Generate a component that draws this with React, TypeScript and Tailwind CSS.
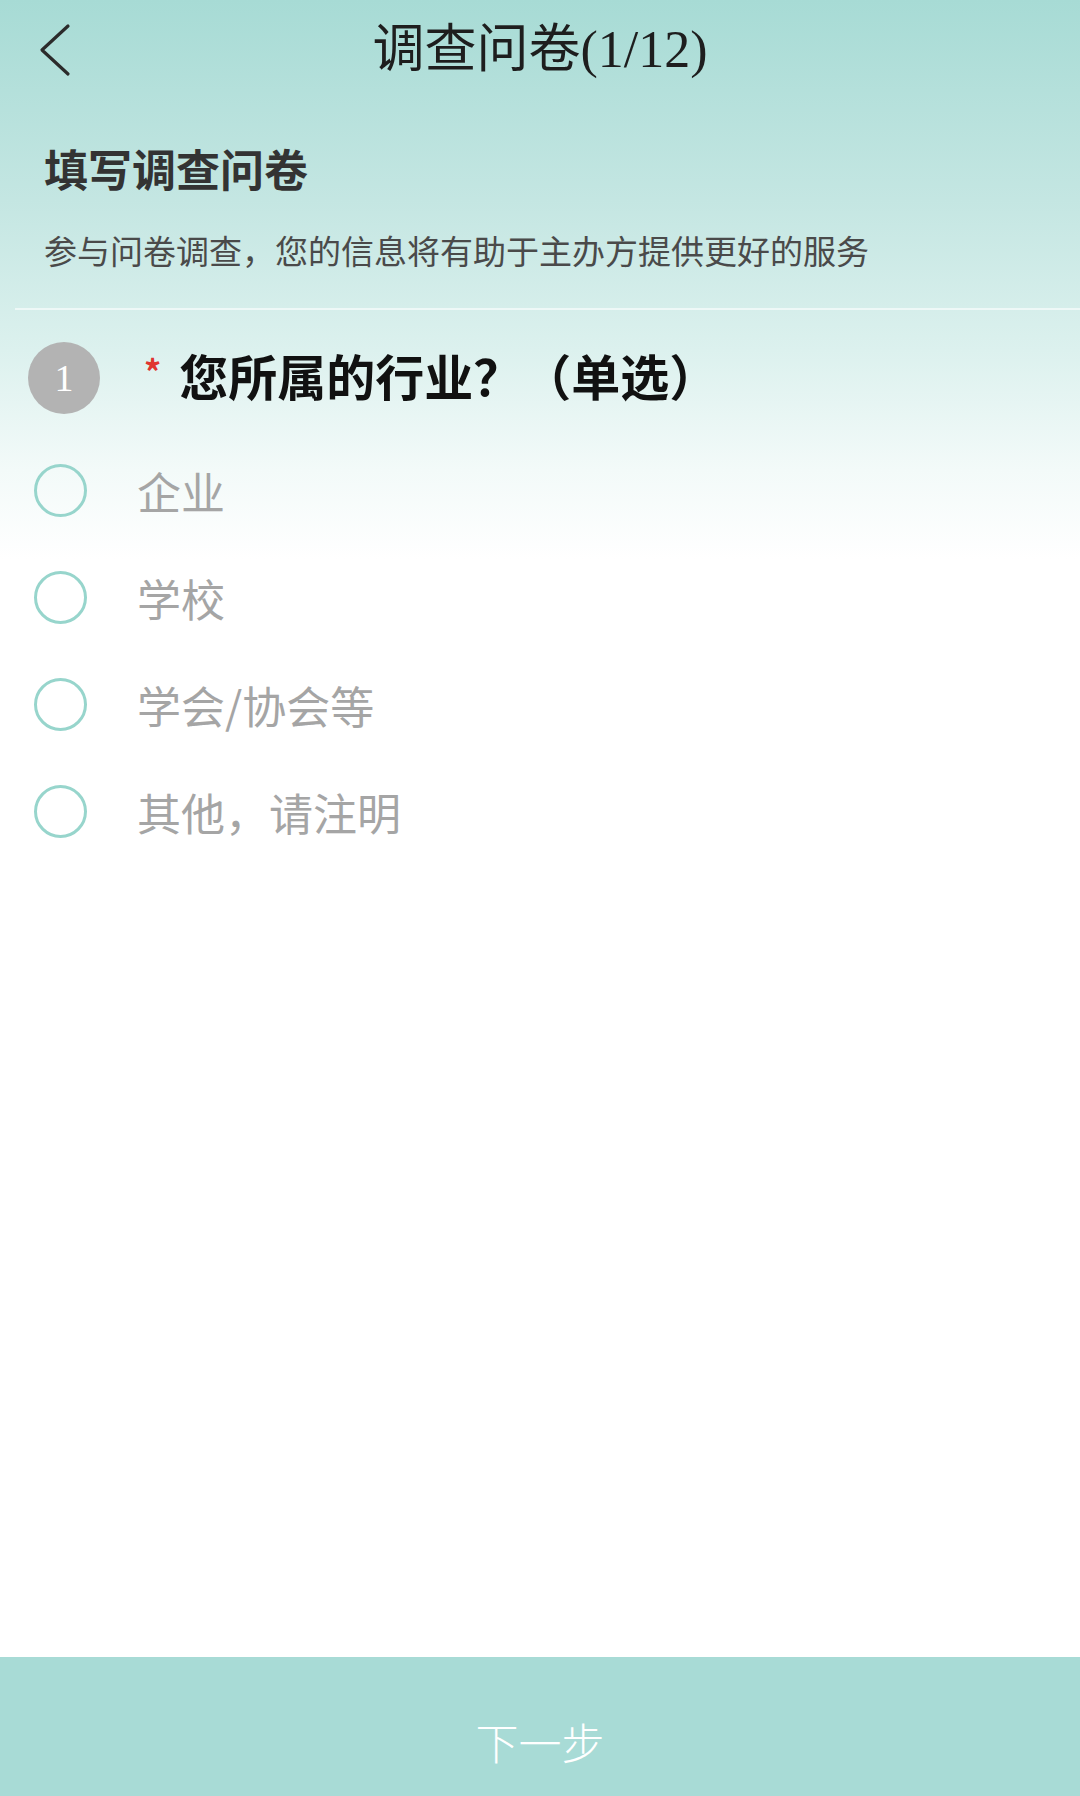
import React from "react";

const options = ["企业", "学校", "学会/协会等", "其他，请注明"];

export default function App() {
  return (
    <div
      className="w-[1080px] h-[1796px] flex flex-col bg-[linear-gradient(180deg,#a7dbd5_0px,#c4e6e2_200px,#dcf1ee_350px,#f3faf9_470px,#ffffff_560px)]"
      style={{ fontFamily: '"Noto Sans CJK SC", "Noto Sans", sans-serif' }}
    >
      {/* Header */}
      <div className="h-[100px] grid grid-cols-[120px_1fr_120px] items-center">
        <div className="pl-[38px] flex items-center">
          <svg width="34" height="54" viewBox="0 0 34 54" fill="none">
            <path d="M30 3 L4 27 L30 51" stroke="#2b2b2b" strokeWidth="3.2" strokeLinecap="round" strokeLinejoin="round" />
          </svg>
        </div>
        <div
          className="text-center text-[52px] leading-none text-[#1e1e1e]"
          style={{ fontFamily: '"Liberation Serif", "Noto Sans CJK SC", serif' }}
        >
          调查问卷(1/12)
        </div>
        <div />
      </div>

      {/* Intro */}
      <div className="pl-[44px] pt-[44px]">
        <div className="text-[44px] leading-[48px] font-bold text-[#333333]">填写调查问卷</div>
        <div className="mt-[38px] text-[33px] leading-[40px] text-[#4a4a4a]">
          参与问卷调查，您的信息将有助于主办方提供更好的服务
        </div>
      </div>

      <div className="mt-[38px] ml-[15px] h-[2px] bg-[#eef8f7]" />

      {/* Question */}
      <div className="mt-[32px] flex items-center pl-[28px]">
        <div
          className="w-[72px] h-[72px] rounded-full bg-[#b3b3b3] flex items-center justify-center text-white text-[38px] leading-none"
          style={{ fontFamily: '"Liberation Serif", serif' }}
        >
          1
        </div>
        <div className="ml-[44px] self-start mt-[12px] text-[#e0342f] text-[34px] leading-none font-bold">*</div>
        <div className="ml-[18px] pb-[7px] text-[49px] leading-[56px] font-bold text-[#111111]">您所属的行业？（单选）</div>
      </div>

      {/* Options */}
      <div className="mt-[50px] flex flex-col gap-[54px]">
        {options.map((o) => (
          <div key={o} className="flex items-center pl-[34px] h-[53px]">
            <div className="w-[53px] h-[53px] rounded-full border-[3px] border-[#97d5cc] box-border" />
            <div className="ml-[50px] text-[44px] leading-none text-[#a5a5a5]">{o}</div>
          </div>
        ))}
      </div>

      <div className="flex-1" />

      {/* Footer */}
      <div className="h-[139px] bg-[#a8dbd6] flex items-center justify-center pt-[30px]">
        <div className="text-white text-[43px] leading-none font-light">下一步</div>
      </div>
    </div>
  );
}
